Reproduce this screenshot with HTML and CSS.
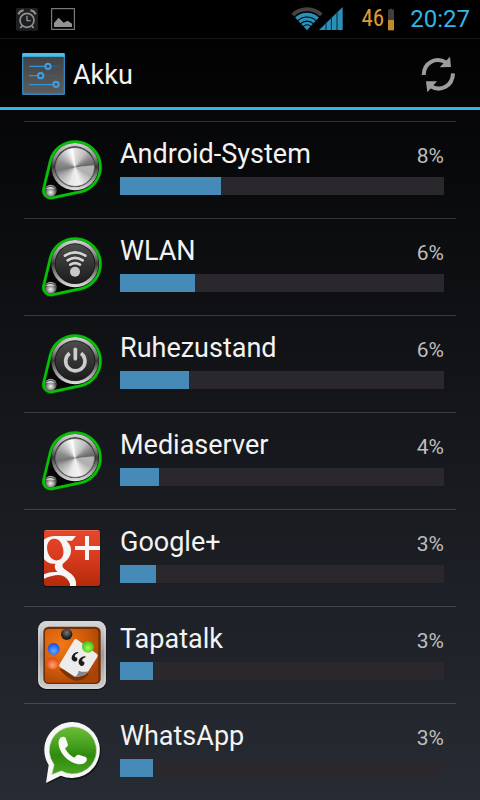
FILE: index.html
```html
<!DOCTYPE html>
<html lang="de">
  <head>
    <meta charset="UTF-8" />
    <meta name="viewport" content="width=device-width, initial-scale=1.0" />
    <title>Akku</title>
    <link rel="stylesheet" href="styles.css">
  </head>
  <body>
    <!-- shared gradients and the knob frame -->
    <svg class="defs" width="0" height="0" aria-hidden="true">
      <defs>
        <linearGradient id="ring" x1="0" y1="0" x2="0" y2="1">
          <stop offset="0" stop-color="#d8d8d8" />
          <stop offset="0.3" stop-color="#8c8c8c" />
          <stop offset="0.5" stop-color="#3a3a3a" />
          <stop offset="0.7" stop-color="#858585" />
          <stop offset="1" stop-color="#e2e2e2" />
        </linearGradient>
        <linearGradient id="dark" x1="0" y1="0" x2="0" y2="1">
          <stop offset="0" stop-color="#4c4c4c" />
          <stop offset="1" stop-color="#1c1c1c" />
        </linearGradient>
        <radialGradient id="small" cx="0.5" cy="0.65" r="0.6">
          <stop offset="0" stop-color="#f4f4f4" />
          <stop offset="0.5" stop-color="#8f8f8f" />
          <stop offset="0.8" stop-color="#4a4a4a" />
          <stop offset="1" stop-color="#a8a8a8" />
        </radialGradient>
        <symbol id="knob" viewBox="36 39 216 216">
          <path d="M79 124A76 76 0 1 1 171 215L86 233A22 22 0 0 1 59 207Z" fill="#060606" stroke="#0a4a08" stroke-width="11" />
          <path d="M79 124A76 76 0 1 1 171 215L86 233A22 22 0 0 1 59 207Z" fill="#060606" stroke="#06c106" stroke-width="8" />
          <circle cx="153" cy="140" r="71" fill="url(#ring)" />
          <circle cx="153" cy="140" r="61" fill="#1b1b1b" />
          <circle cx="80" cy="212" r="18" fill="url(#small)" />
          <path d="M66 207Q80 194 93 208Q82 203 66 207Z" fill="#eee" />
        </symbol>
      </defs>
    </svg>

    <div class="status">
      <svg width="24" height="24" viewBox="45 21 72 72">
        <rect x="48" y="24" width="66" height="68" rx="4" fill="#1d1f20" />
        <g fill="none" stroke="#929292" stroke-width="5">
          <circle cx="81" cy="61" r="21" />
          <path d="M81 47V62H92" stroke-width="4" />
          <path d="M55 43Q60 32 71 31M107 43Q102 32 91 31" stroke-width="6" />
          <path d="M67 77L61 84M95 77L101 84" />
        </g>
      </svg>
      <svg width="24" height="24" viewBox="153 21 72 72">
        <rect x="155" y="26" width="68" height="62" fill="none" stroke="#929292" stroke-width="3" />
        <path d="M162 81V69L176 53L191 68L203 62L216 71V81Z" fill="#929292" />
      </svg>
      <svg class="signal" width="53" height="24" viewBox="153 21 159 72">
        <clipPath id="fan"><path d="M201 91L150 36V15H252V36Z" /></clipPath>
        <g clip-path="url(#fan)" fill="none" stroke="#2990ba">
          <circle cx="201" cy="90" r="62" stroke="#434343" stroke-width="12" />
          <circle cx="201" cy="90" r="46" stroke-width="11" />
          <circle cx="201" cy="90" r="33" stroke-width="9" />
          <circle cx="201" cy="90" r="21" stroke-width="8" />
          <circle cx="201" cy="90" r="7" stroke-width="14" />
        </g>
        <path d="M237 90L308 21V90Z" fill="#2990ba" />
        <path d="M258 65V90M274 50V90M291 34V90" stroke="#062b3a" stroke-width="3" />
      </svg>
      <span class="level">46</span>
      <svg class="battery" width="6" height="24" viewBox="441 21 18 72">
        <path d="M441 29H446V26H454V29H459V61H441Z" fill="#3f3f3f" />
        <path d="M441 60H459V91H441Z" fill="#bd8a32" />
      </svg>
      <span class="clock">20:27</span>
    </div>

    <header class="header">
      <svg width="44" height="44" viewBox="66 156 132 132">
        <defs>
          <linearGradient id="panel" x1="0" y1="0" x2="0" y2="1">
            <stop offset="0" stop-color="#424242" />
            <stop offset="1" stop-color="#5c5c5c" />
          </linearGradient>
        </defs>
        <rect x="66" y="159" width="129" height="126" rx="4" fill="#2f86bf" />
        <rect x="70" y="169" width="121" height="111" fill="url(#panel)" />
        <path d="M69 159H192L195 170H66Z" fill="#49bfee" />
        <g stroke-width="4" fill="none">
          <path d="M158 199H177M132 227H177" stroke="#315f82" />
          <path d="M87 199H136M87 227H114M87 254H160" stroke="#2f95dc" />
          <g stroke="#3d9ee0" stroke-width="6">
            <circle cx="144" cy="199" r="8" />
            <circle cx="122" cy="227" r="8" />
            <circle cx="168" cy="253" r="8" />
          </g>
        </g>
      </svg>
      <h1>Akku</h1>
      <button class="refresh" type="button" aria-label="Aktualisieren">
        <svg width="40" height="40" viewBox="537 162 120 120">
          <g fill="none" stroke="#9d9d9d" stroke-width="12">
            <path d="M551 225C552 187 588 169 619 188" />
            <path d="M639 220C638 258 602 277 571 258" />
          </g>
          <path d="M630 170L633 201L599 202Z" fill="#9d9d9d" />
          <path d="M558 244L591 244L562 277Z" fill="#9d9d9d" />
        </svg>
      </button>
    </header>

    <ul class="list">
      <li class="item">
        <div class="icon">
          <svg width="72" height="72"><use href="#knob" /></svg>
          <span class="metal"></span>
        </div>
        <div class="info">
          <div class="line">
            <span class="name">Android-System</span>
            <span class="percent">8%</span>
          </div>
          <div class="bar"><div class="fill" style="width: 31.2%"></div></div>
        </div>
      </li>
      <li class="item">
        <div class="icon">
          <svg width="72" height="72" viewBox="36 39 216 216">
            <use href="#knob" x="36" y="39" width="216" height="216" />
            <circle cx="153" cy="140" r="58" fill="url(#dark)" />
            <circle cx="153" cy="164" r="15" fill="#c9c9c9" />
            <g fill="none" stroke="#d6d6d6" stroke-width="8" stroke-linecap="round">
              <path d="M123 116Q153 96 184 116" />
              <path d="M131 130Q153 115 176 130" />
              <path d="M139 143Q153 134 168 143" />
            </g>
          </svg>
        </div>
        <div class="info">
          <div class="line">
            <span class="name">WLAN</span>
            <span class="percent">6%</span>
          </div>
          <div class="bar"><div class="fill" style="width: 23.2%"></div></div>
        </div>
      </li>
      <li class="item">
        <div class="icon">
          <svg width="72" height="72" viewBox="36 39 216 216">
            <use href="#knob" x="36" y="39" width="216" height="216" />
            <circle cx="153" cy="140" r="58" fill="url(#dark)" />
            <g fill="none" stroke="#cdcdcd" stroke-width="11">
              <path d="M137 118A29 29 0 1 0 171 118" />
              <path d="M154 106V134" stroke-linecap="round" />
            </g>
          </svg>
        </div>
        <div class="info">
          <div class="line">
            <span class="name">Ruhezustand</span>
            <span class="percent">6%</span>
          </div>
          <div class="bar"><div class="fill" style="width: 21.3%"></div></div>
        </div>
      </li>
      <li class="item">
        <div class="icon">
          <svg width="72" height="72"><use href="#knob" /></svg>
          <span class="metal"></span>
        </div>
        <div class="info">
          <div class="line">
            <span class="name">Mediaserver</span>
            <span class="percent">4%</span>
          </div>
          <div class="bar"><div class="fill" style="width: 12%"></div></div>
        </div>
      </li>
      <li class="item">
        <div class="icon">
          <svg width="72" height="72" viewBox="36 18 216 216">
            <defs>
              <linearGradient id="red" x1="0" y1="0" x2="0" y2="1">
                <stop offset="0" stop-color="#e5472c" />
                <stop offset="0.5" stop-color="#d73a1d" />
                <stop offset="1" stop-color="#b52a0c" />
              </linearGradient>
              <clipPath id="tile"><rect x="60" y="45" width="168" height="168" rx="8" /></clipPath>
            </defs>
            <rect x="59" y="49" width="170" height="168" rx="9" fill="#0e1012" />
            <g clip-path="url(#tile)">
              <rect x="60" y="45" width="168" height="168" fill="url(#red)" />
              <path d="M60 46H228" stroke="#f08a72" stroke-width="2" />
              <g fill="#f6f6f6">
                <path fill-rule="evenodd" d="M60 74Q74 61 100 63H156L144 77H127Q142 90 141 108C140 129 125 138 118 145Q111 153 121 162L143 178Q158 192 156 213H138Q140 199 122 185Q104 172 60 191V178Q78 169 101 171Q88 161 94 146Q72 148 60 132ZM90 71C74 72 67 88 70 106C73 125 86 138 101 136C117 133 121 117 117 99C113 82 105 70 90 71Z" />
                <path d="M183 63H195V93H228V105H195V135H183V105H153V93H183Z" />
              </g>
            </g>
          </svg>
        </div>
        <div class="info">
          <div class="line">
            <span class="name">Google+</span>
            <span class="percent">3%</span>
          </div>
          <div class="bar"><div class="fill" style="width: 11.1%"></div></div>
        </div>
      </li>
      <li class="item">
        <div class="icon">
          <svg width="72" height="72" viewBox="36 24 216 216">
            <defs>
              <linearGradient id="silver" x1="0" y1="0" x2="0" y2="1">
                <stop offset="0" stop-color="#d9d9d9" />
                <stop offset="0.5" stop-color="#9b9b9b" />
                <stop offset="1" stop-color="#cfcfcf" />
              </linearGradient>
              <radialGradient id="orange" cx="0.3" cy="0.3" r="0.8">
                <stop offset="0" stop-color="#f07a14" />
                <stop offset="0.6" stop-color="#d0590a" />
                <stop offset="1" stop-color="#a84404" />
              </radialGradient>
              <radialGradient id="black" cy="0.35"><stop offset="0" stop-color="#777" /><stop offset="1" stop-color="#1d1d1d" /></radialGradient>
              <radialGradient id="blue" cy="0.65" r="0.6"><stop offset="0" stop-color="#5cb4ff" /><stop offset="1" stop-color="#1c4be6" /></radialGradient>
              <radialGradient id="coral" cy="0.65" r="0.6"><stop offset="0" stop-color="#ffa465" /><stop offset="1" stop-color="#de4a18" /></radialGradient>
              <radialGradient id="green" cy="0.6" r="0.6"><stop offset="0" stop-color="#a6ff4a" /><stop offset="1" stop-color="#35b516" /></radialGradient>
            </defs>
            <rect x="41" y="36" width="206" height="204" rx="25" fill="#0c0e10" />
            <rect x="42" y="33" width="204" height="204" rx="25" fill="url(#silver)" />
            <rect x="45" y="36" width="198" height="198" rx="22" fill="none" stroke="#d6d6d6" stroke-width="3" />
            <rect x="58" y="50" width="172" height="172" rx="16" fill="#6f2f06" />
            <path d="M74 57H214Q223 57 223 68V208Q223 218 213 218H74Q63 218 63 208V68Q63 57 74 57Z" fill="url(#orange)" />
            <path d="M105 176Q128 205 153 212Q180 215 196 190Z" fill="#7a3306" />
            <path d="M157 87L219 132Q223 136 220 141L193 184Q180 202 152 200L108 171Q103 168 107 162L150 91Q153 86 157 87Z" fill="#ececec" />
            <path d="M152 200Q163 194 164 182Q178 188 193 184Q180 202 152 200Z" fill="#878787" />
            <g fill="#1c1c1c">
              <path d="M163 129Q150 133 153 141Q161 142 160 149Q157 157 149 154Q140 149 144 138Q150 126 162 126Z" />
              <path d="M185 142Q172 146 175 154Q183 155 181 162Q178 170 170 167Q161 161 165 150Q172 138 184 139Z" />
            </g>
            <circle cx="128" cy="73" r="17" fill="url(#black)" />
            <circle cx="89" cy="117" r="18" fill="url(#blue)" />
            <circle cx="86" cy="160" r="18" fill="url(#coral)" />
            <circle cx="192" cy="110" r="18" fill="url(#green)" />
          </svg>
        </div>
        <div class="info">
          <div class="line">
            <span class="name">Tapatalk</span>
            <span class="percent">3%</span>
          </div>
          <div class="bar"><div class="fill" style="width: 10.2%"></div></div>
        </div>
      </li>
      <li class="item">
        <div class="icon">
          <svg width="72" height="72" viewBox="36 30 216 216">
            <defs>
              <linearGradient id="bubble" x1="0" y1="0" x2="0" y2="1">
                <stop offset="0" stop-color="#6cbf35" />
                <stop offset="0.45" stop-color="#3f9a1b" />
                <stop offset="0.6" stop-color="#2f8a0e" />
                <stop offset="1" stop-color="#49a520" />
              </linearGradient>
            </defs>
            <path d="M146 54A85 85 0 1 1 112 217L68 237L75 184A85 85 0 0 1 146 54Z" fill="#121518" />
            <path d="M146 51A84 84 0 1 1 110 212L66 234L74 180A84 84 0 0 1 146 51Z" fill="#f7f7f7" />
            <path d="M146 65A71 71 0 1 1 112 198L83 209L90 179A71 71 0 0 1 146 65Z" fill="url(#bubble)" stroke="#dcdcdc" stroke-width="2" />
            <path d="M109 98Q120 92 125 99L132 119Q131 125 123 130Q132 149 151 158Q158 148 164 149L185 156Q191 160 187 169Q178 181 160 177C130 170 108 144 104 119Q102 106 109 98Z" fill="#fafafa" />
          </svg>
        </div>
        <div class="info">
          <div class="line">
            <span class="name">WhatsApp</span>
            <span class="percent">3%</span>
          </div>
          <div class="bar"><div class="fill" style="width: 10.2%"></div></div>
        </div>
      </li>
    </ul>
  </body>
</html>
```

FILE: styles.css
```css
* {
  box-sizing: border-box;
}
html {
  background: #000;
}
body {
  margin: 0;
  min-height: 100vh;
  background: linear-gradient(#000, #272b33);
  font-family: Roboto, "Noto Sans", sans-serif;
  color: #f3f3f3;
}
svg {
  display: block;
  flex: none;
}
.defs {
  position: absolute;
}

/* status bar */
.status {
  display: flex;
  align-items: center;
  height: 38px;
  padding: 0 10px 0 15px;
  gap: 12px;
  background: #000;
}
.status .signal {
  margin-left: auto;
}
.status .level {
  margin-left: 6px;
  font-family: "Liberation Sans Narrow", "Roboto Condensed", Roboto, sans-serif;
  font-size: 23px;
  line-height: 24px;
  color: #dd9c31;
}
.status .battery {
  margin-left: -8px;
}
.status .clock {
  margin-left: 4px;
  font-size: 24px;
  line-height: 28px;
  color: #33b5e5;
}

/* title bar */
.header {
  display: flex;
  align-items: center;
  height: 72px;
  padding: 2px 21px 0 22px;
  border-top: 1px solid #141414;
  border-bottom: 3px solid #33b5e5;
}
.header h1 {
  flex: 1;
  margin: 0 0 0 7px;
  padding-top: 2px;
  font-size: 27px;
  font-weight: 400;
  line-height: 32px;
}
.header .refresh {
  padding: 0;
  border: none;
  background: none;
  cursor: pointer;
}

/* usage list */
.list {
  margin: 0;
  padding: 11px 24px 0;
  list-style: none;
}
.item {
  display: flex;
  gap: 12px;
  padding: 11px 12px 13px;
  border-top: 1px solid rgba(255, 255, 255, 0.17);
}
.icon {
  position: relative;
  width: 72px;
  height: 72px;
}
/* brushed face of a knob */
.icon .metal {
  position: absolute;
  top: 14px;
  left: 19px;
  width: 40px;
  height: 40px;
  border: 1px solid #6d6d6d;
  border-radius: 50%;
  background: conic-gradient(#e0e0e0, #c0c0c0 35deg, #8a8a8a 60deg, #666 82deg, #b5b5b5 88deg, #b0b0b0 120deg, #f2f2f2 165deg, #e8e8e8 195deg, #a8a8a8 240deg, #777 260deg, #8c8c8c 285deg, #d0d0d0 325deg, #fff 350deg, #e0e0e0);
}
.info {
  flex: 1;
  padding-top: 5px;
}
.line {
  display: flex;
  justify-content: space-between;
  align-items: baseline;
}
.name {
  font-size: 27px;
  line-height: 32px;
}
.percent {
  font-size: 21px;
  line-height: 24px;
  color: #bebebe;
}
.bar {
  height: 18px;
  margin-top: 7px;
  background: #2a272d;
}
.bar .fill {
  height: 100%;
  background: #468bb8;
}
```
